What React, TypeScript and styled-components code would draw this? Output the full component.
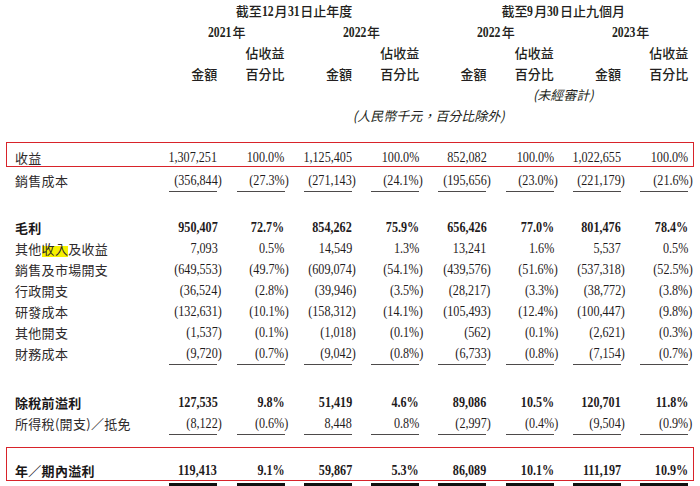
import React from 'react';
import styled, { createGlobalStyle, css } from 'styled-components';

const Global = createGlobalStyle`
  html, body { margin: 0; padding: 0; background: #ffffff; }
  body {
    width: 700px;
    height: 486px;
    overflow: hidden;
    color: #231f20;
    font-family: "Noto Sans CJK TC", "Liberation Serif", serif;
  }
`;

const RED = '#d8232a';

const Page = styled.div`
  padding-left: 6px;
  width: 700px;
  box-sizing: border-box;
`;

type RowProps = { $h?: number; $pt?: number; $mt?: number; $box?: boolean };

const Row = styled.div<RowProps>`
  display: grid;
  grid-template-columns: 135px repeat(8, 67.3px);
  grid-template-rows: 21px;
  width: 688px;
  box-sizing: border-box;
  padding: ${(p) => p.$pt ?? 0}px 5px 0 9px;
  margin-top: ${(p) => p.$mt ?? 0}px;
  height: ${(p) => p.$h ?? 21}px;
  ${(p) =>
    p.$box &&
    css`
      outline: 1.5px solid ${RED};
      outline-offset: -1.5px;
    `}
`;

const Head = styled.div<{ $col: string; $align?: 'center' | 'right'; $italic?: boolean; $light?: boolean }>`
  grid-column: ${(p) => p.$col};
  text-align: ${(p) => p.$align ?? 'right'};
  padding-left: ${(p) => (p.$align === 'center' ? '19px' : '0')};
  font-family: "Noto Sans CJK TC", sans-serif;
  font-size: 13px;
  line-height: 21px;
  font-weight: ${(p) => (p.$light ? 400 : 500)};
  font-style: ${(p) => (p.$italic ? 'italic' : 'normal')};
  color: #231f20;
  white-space: nowrap;
`;

/* serif digits inside the CJK headers, drawn condensed like the source */
const HeadDigits = styled.span<{ $n: number }>`
  display: inline-block;
  font-family: "Liberation Serif", serif;
  font-weight: 700;
  font-size: 15px;
  transform: scaleX(0.78);
  transform-origin: left center;
  margin-right: ${(p) => -(p.$n * 7.5 * 0.22) + 1}px;
`;

const Label = styled.div<{ $bold?: boolean }>`
  font-family: "Noto Sans CJK TC", sans-serif;
  font-size: 13px;
  letter-spacing: 0.3px;
  line-height: 21px;
  font-weight: ${(p) => (p.$bold ? 700 : 400)};
  color: ${(p) => (p.$bold ? '#1a1718' : '#2e2a2b')};
  white-space: nowrap;
`;

const Mark = styled.span`
  background: linear-gradient(to bottom, transparent 38%, #f6f000 38%, #f6f000 96%, transparent 96%);
`;

const Cell = styled.div<{ $rule?: 'single' | 'thick' }>`
  justify-self: end;
  width: 48px;
  height: 21px;
  display: flex;
  justify-content: flex-end;
  align-items: center;
  white-space: nowrap;
  ${(p) => p.$rule === 'single' && css`border-bottom: 1px solid #4d4a4a;`}
  ${(p) => p.$rule === 'thick' && css`height: 23px; align-items: flex-start; border-bottom: 4px solid #111;`}
`;

const Num = styled.span<{ $bold?: boolean }>`
  display: inline-block;
  font-family: "Liberation Serif", serif;
  font-size: 15px;
  line-height: 21px;
  font-weight: ${(p) => (p.$bold ? 700 : 400)};
  color: #1f1b1c;
  transform: scaleX(0.81);
  transform-origin: right center;
`;

const Hang = styled.span`
  margin-right: -5px;
`;

type Line = {
  label: React.ReactNode;
  vals: string[];
  bold?: boolean;
  rule?: 'single' | 'thick';
  mt?: number;
  box?: boolean;
  h?: number;
  pt?: number;
};

const lines: Line[] = [
  {
    label: '收益',
    vals: ['1,307,251', '100.0%', '1,125,405', '100.0%', '852,082', '100.0%', '1,022,655', '100.0%'],
    mt: 16,
    box: true,
    h: 25,
    pt: 5,
  },
  {
    label: '銷售成本',
    vals: ['(356,844)', '(27.3%)', '(271,143)', '(24.1%)', '(195,656)', '(23.0%)', '(221,179)', '(21.6%)'],
    rule: 'single',
    mt: 2.5,
  },
  {
    label: '毛利',
    vals: ['950,407', '72.7%', '854,262', '75.9%', '656,426', '77.0%', '801,476', '78.4%'],
    bold: true,
    mt: 26,
  },
  {
    label: (
      <>
        其他<Mark>收入</Mark>及收益
      </>
    ),
    vals: ['7,093', '0.5%', '14,549', '1.3%', '13,241', '1.6%', '5,537', '0.5%'],
  },
  {
    label: '銷售及市場開支',
    vals: ['(649,553)', '(49.7%)', '(609,074)', '(54.1%)', '(439,576)', '(51.6%)', '(537,318)', '(52.5%)'],
  },
  {
    label: '行政開支',
    vals: ['(36,524)', '(2.8%)', '(39,946)', '(3.5%)', '(28,217)', '(3.3%)', '(38,772)', '(3.8%)'],
  },
  {
    label: '研發成本',
    vals: ['(132,631)', '(10.1%)', '(158,312)', '(14.1%)', '(105,493)', '(12.4%)', '(100,447)', '(9.8%)'],
  },
  {
    label: '其他開支',
    vals: ['(1,537)', '(0.1%)', '(1,018)', '(0.1%)', '(562)', '(0.1%)', '(2,621)', '(0.3%)'],
  },
  {
    label: '財務成本',
    vals: ['(9,720)', '(0.7%)', '(9,042)', '(0.8%)', '(6,733)', '(0.8%)', '(7,154)', '(0.7%)'],
    rule: 'single',
  },
  {
    label: '除稅前溢利',
    vals: ['127,535', '9.8%', '51,419', '4.6%', '89,086', '10.5%', '120,701', '11.8%'],
    bold: true,
    mt: 28,
  },
  {
    label: '所得稅(開支)／抵免',
    vals: ['(8,122)', '(0.6%)', '8,448', '0.8%', '(2,997)', '(0.4%)', '(9,504)', '(0.9%)'],
    rule: 'single',
  },
  {
    label: '年／期內溢利',
    vals: ['119,413', '9.1%', '59,867', '5.3%', '86,089', '10.1%', '111,197', '10.9%'],
    bold: true,
    rule: 'thick',
    mt: 13.5,
    box: true,
    h: 34,
    pt: 13,
  },
];

const Value: React.FC<{ v: string; bold?: boolean }> = ({ v, bold }) => {
  const neg = v.startsWith('(') && v.endsWith(')');
  return (
    <Num $bold={bold}>
      {neg ? (
        <>
          {v.slice(0, -1)}
          <Hang>)</Hang>
        </>
      ) : (
        v
      )}
    </Num>
  );
};

const D: React.FC<{ t: string }> = ({ t }) => <HeadDigits $n={t.length}>{t}</HeadDigits>;

export default function App() {
  return (
    <>
      <Global />
      <Page>
        <Row>
          <Head $col="2 / span 4" $align="center">
            截至<D t="12" />月<D t="31" />日止年度
          </Head>
          <Head $col="6 / span 4" $align="center">
            截至<D t="9" />月<D t="30" />日止九個月
          </Head>
        </Row>
        <Row>
          {['2021', '2022', '2022', '2023'].map((y, i) => (
            <Head key={i} $col={`${2 + i * 2} / span 2`} $align="center">
              <D t={y} />年
            </Head>
          ))}
        </Row>
        <Row>
          {[3, 5, 7, 9].map((c) => (
            <Head key={c} $col={`${c}`}>
              佔收益
            </Head>
          ))}
        </Row>
        <Row>
          {[2, 3, 4, 5, 6, 7, 8, 9].map((c) => (
            <Head key={c} $col={`${c}`}>
              {c % 2 === 0 ? '金額' : '百分比'}
            </Head>
          ))}
        </Row>
        <Row>
          <Head $col="6 / span 4" $align="center" $italic $light>
            (未經審計)
          </Head>
        </Row>
        <Row>
          <Head $col="2 / span 8" $align="center" $italic $light>
            (人民幣千元，百分比除外)
          </Head>
        </Row>
        {lines.map((l, i) => (
          <Row key={i} $mt={l.mt} $box={l.box} $h={l.h} $pt={l.pt}>
            <Label $bold={l.bold}>{l.label}</Label>
            {l.vals.map((v, j) => (
              <Cell key={j} $rule={l.rule}>
                <Value v={v} bold={l.bold} />
              </Cell>
            ))}
          </Row>
        ))}
      </Page>
    </>
  );
}
